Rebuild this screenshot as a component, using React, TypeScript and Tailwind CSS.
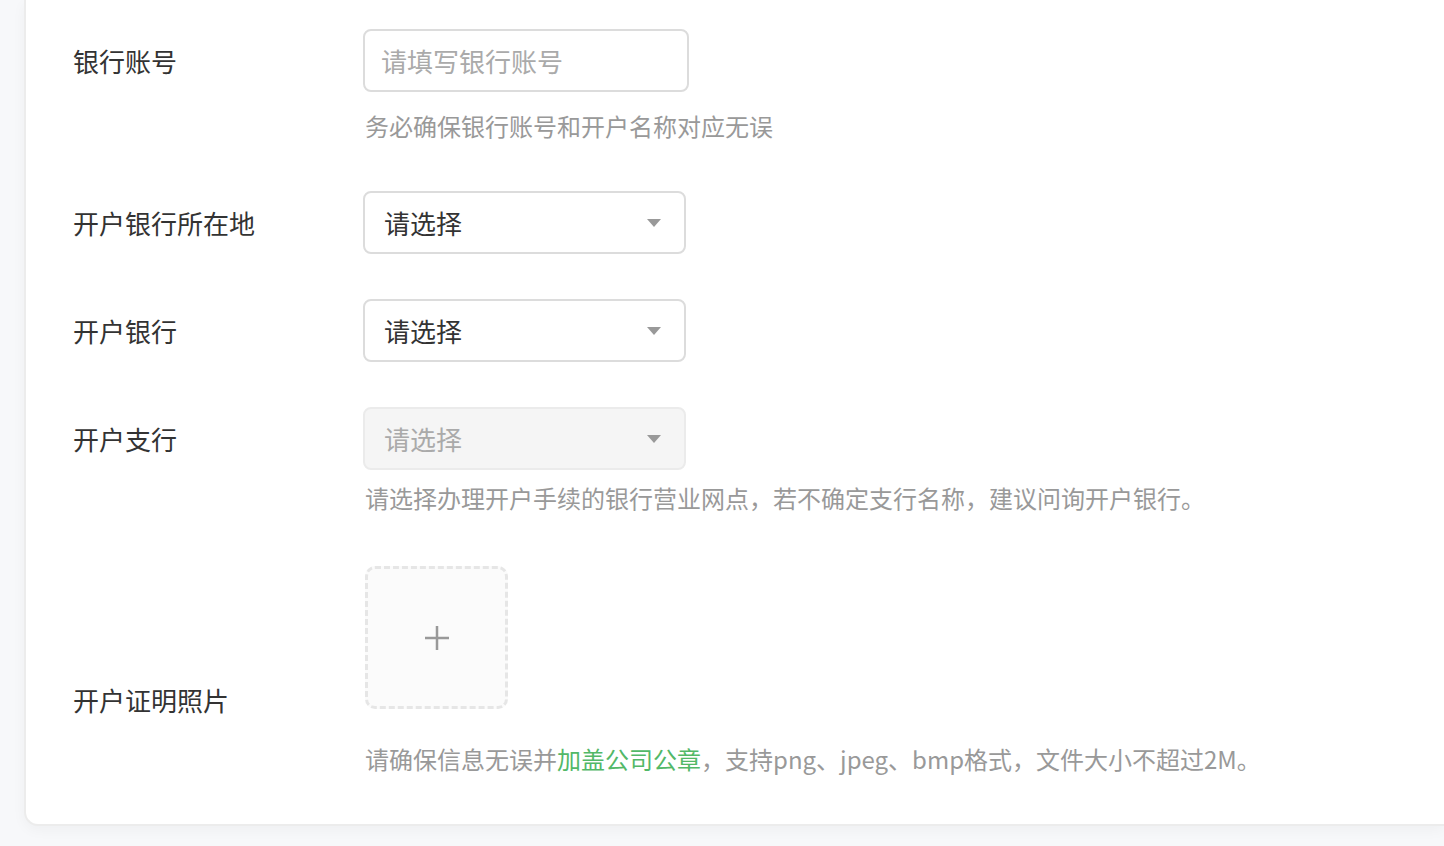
const font = { fontFamily: '"Noto Sans CJK SC", "Noto Sans", sans-serif' };

function Arrow() {
  return (
    <svg width="14" height="8" viewBox="0 0 14 8" className="shrink-0">
      <path d="M0 0 L14 0 L7 8 Z" fill="#999" />
    </svg>
  );
}

function Select({ disabled }: { disabled?: boolean }) {
  return (
    <div
      className={`flex items-center justify-between w-[323px] h-[63px] rounded-[8px] border-2 pl-[19px] pr-[23px] ${
        disabled
          ? 'bg-[#f5f5f5] border-[#ebebeb] text-[#aaaaaa]'
          : 'bg-white border-[#dcdcdc] text-[#333333]'
      }`}
    >
      <span className="text-[26px] leading-[34px]">请选择</span>
      <Arrow />
    </div>
  );
}

function Label({ children }: { children: React.ReactNode }) {
  return (
    <div className="w-[290px] shrink-0 h-[63px] flex items-center text-[26px] text-[#333333]">
      {children}
    </div>
  );
}

export default function App() {
  return (
    <div className="w-[1444px] h-[846px] bg-[#f7f8fa] overflow-hidden" style={font}>
      <div className="ml-[24px] bg-white border-l-2 border-b-2 border-[#ececec] rounded-bl-[14px] shadow-[0_4px_14px_rgba(0,0,0,0.04)] pl-[47px] pt-[29px] pb-[48px]">
        {/* 银行账号 */}
        <div className="flex">
          <Label>银行账号</Label>
          <div className="flex flex-col">
            <div className="w-[326px] h-[63px] rounded-[8px] border-2 border-[#dcdcdc] flex items-center pl-[16px]">
              <span className="text-[26px] leading-[34px] text-[#aaaaaa]">请填写银行账号</span>
            </div>
            <div className="mt-[17px] ml-[2px] text-[24px] leading-[34px] text-[#999999]">
              务必确保银行账号和开户名称对应无误
            </div>
          </div>
        </div>

        {/* 开户银行所在地 */}
        <div className="flex mt-[48px]">
          <Label>开户银行所在地</Label>
          <Select />
        </div>

        {/* 开户银行 */}
        <div className="flex mt-[45px]">
          <Label>开户银行</Label>
          <Select />
        </div>

        {/* 开户支行 */}
        <div className="flex mt-[45px]">
          <Label>开户支行</Label>
          <div className="flex flex-col">
            <Select disabled />
            <div className="mt-[11px] ml-[2px] text-[24px] leading-[34px] text-[#999999] whitespace-nowrap">
              请选择办理开户手续的银行营业网点，若不确定支行名称，建议问询开户银行。
            </div>
          </div>
        </div>

        {/* 开户证明照片 */}
        <div className="flex mt-[51px]">
          <div className="w-[292px] shrink-0 pt-[117px] text-[26px] leading-[34px] text-[#333333]">
            开户证明照片
          </div>
          <div className="flex flex-col">
            <div className="w-[143px] h-[143px] rounded-[10px] border-[3px] border-dashed border-[#e6e6e6] bg-[#fbfbfb] flex items-center justify-center">
              <svg width="26" height="26" viewBox="0 0 26 26">
                <path d="M13 1 V25 M1 13 H25" stroke="#999" strokeWidth="2.5" />
              </svg>
            </div>
            <div className="mt-[33px] text-[24px] leading-[34px] text-[#999999] whitespace-nowrap">
              请确保信息无误并<span className="text-[#52b867]">加盖公司公章</span>，支持png、jpeg、bmp格式，文件大小不超过2M。
            </div>
          </div>
        </div>
      </div>
    </div>
  );
}
